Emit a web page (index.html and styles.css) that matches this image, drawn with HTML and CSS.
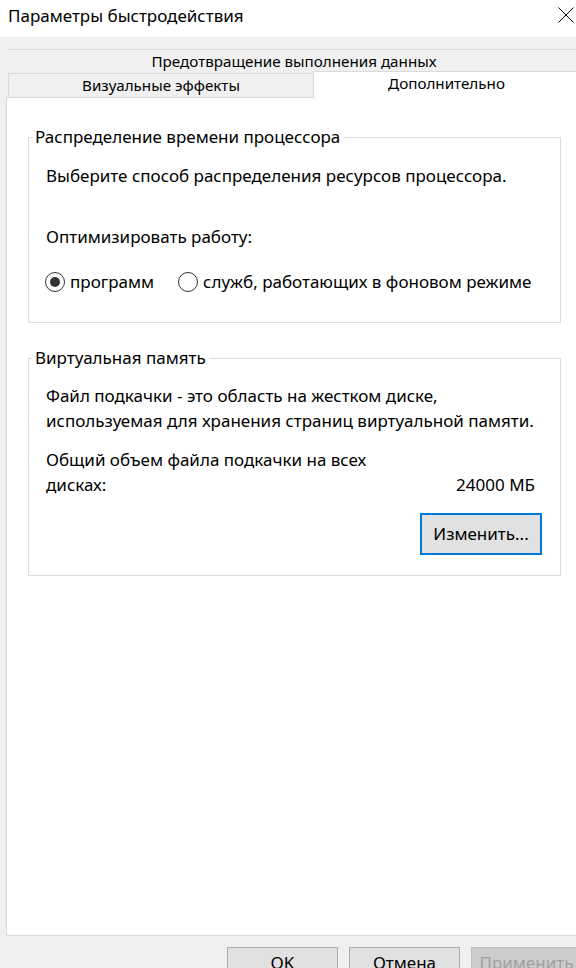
FILE: index.html
```html
<!DOCTYPE html>
<html lang="ru">
<head>
<meta charset="utf-8">
<title>Параметры быстродействия</title>
<link rel="stylesheet" href="styles.css">
</head>
<body>
<div class="dialog">
  <div class="titlebar">
    <span class="title">Параметры быстродействия</span>
    <svg class="close" viewBox="0 0 16 16" width="16" height="16" aria-hidden="true">
      <path d="M0.5 0.5 L15.5 15.5 M15.5 0.5 L0.5 15.5" stroke="#000" stroke-width="1" fill="none"/>
    </svg>
  </div>

  <div class="tabs">
    <div class="tab-row tab-row-back">
      <div class="tab tab-wide">Предотвращение выполнения данных</div>
    </div>
    <div class="tab-row tab-row-front">
      <div class="tab tab-plain">Визуальные эффекты</div>
      <div class="tab tab-active">Дополнительно</div>
    </div>
  </div>

  <div class="panel">
    <fieldset class="group group-cpu">
      <legend class="group-title">Распределение времени процессора</legend>
      <div class="group-body body-cpu">
        <p class="text">Выберите способ распределения ресурсов процессора.</p>
        <p class="text optimize">Оптимизировать работу:</p>
        <div class="radios">
          <label class="radio"><span class="radio-mark checked"></span>программ</label>
          <label class="radio"><span class="radio-mark"></span>служб, работающих в фоновом режиме</label>
        </div>
      </div>
    </fieldset>

    <fieldset class="group group-vm">
      <legend class="group-title">Виртуальная память</legend>
      <div class="group-body body-vm">
        <p class="text text-multi">Файл подкачки - это область на жестком диске, используемая для хранения страниц виртуальной памяти.</p>
        <div class="total">
          <span class="total-label">Общий объем файла подкачки на всех дисках:</span>
          <span class="total-value">24000 МБ</span>
        </div>
        <div class="change-row">
          <button class="change-btn" type="button">Изменить...</button>
        </div>
      </div>
    </fieldset>
  </div>

  <div class="buttons">
    <button class="btn" type="button">OK</button>
    <button class="btn" type="button">Отмена</button>
    <button class="btn btn-disabled" type="button">Применить</button>
  </div>
</div>
</body>
</html>
```
FILE: styles.css
```css
html, body {
  margin: 0;
  padding: 0;
  overflow: hidden;
  background: #f0f0f0;
}

body {
  font-family: "Noto Sans", "Open Sans", sans-serif;
  font-size: 17px;
  color: #000;
}

.dialog {
  width: 588px;
}

/* Title bar */
.titlebar {
  height: 37px;
  box-sizing: border-box;
  background: #fff;
  display: flex;
  justify-content: space-between;
  align-items: flex-start;
  padding: 0 14px 0 8px;
}

.title {
  line-height: 24px;
  margin-top: 4px;
}

.close {
  margin-top: 7px;
  display: block;
}

/* Tabs */
.tabs {
  margin: 12px 0 0 8px;
  width: 572px;
  font-size: 15.2px;
}

.tab {
  line-height: 23px;
  text-align: center;
  border-top: 1px solid #d9d9d9;
  white-space: nowrap;
}

.tab-row-front {
  display: flex;
  align-items: flex-end;
}

.tab-plain {
  width: 306px;
  box-sizing: border-box;
  border-left: 1px solid #d9d9d9;
  border-right: 1px solid #d9d9d9;
}

.tab-active {
  flex: 1;
  height: 27px;
  box-sizing: border-box;
  margin: -2px 0 -1px;
  background: #fff;
  border-right: 1px solid #d9d9d9;
  position: relative;
  z-index: 1;
}

/* Panel */
.panel {
  margin-left: 6px;
  width: 576px;
  height: 839px;
  box-sizing: border-box;
  background: #fff;
  border: 1px solid #d9d9d9;
}

.group {
  margin: 0 0 0 21px;
  padding: 0;
  width: 533px;
  box-sizing: border-box;
  border: 1px solid #dcdcdc;
  min-inline-size: 0;
}

.group-cpu {
  margin-top: 27px;
}

.group-vm {
  margin-top: 23px;
}

.group-title {
  margin-left: 3px;
  padding: 0 3px;
  line-height: 24px;
}

.group-body {
  padding-left: 17px;
  padding-right: 25px;
}

.body-cpu {
  padding-top: 15px;
  padding-bottom: 28px;
}

.body-vm {
  padding-top: 13px;
  padding-bottom: 20px;
}

.text {
  margin: 0;
  line-height: 24px;
}

.optimize {
  margin-top: 37px;
}

.text-multi {
  line-height: 25px;
}

/* Radios */
.radios {
  display: flex;
  margin-top: 21px;
  margin-left: -1px;
  line-height: 24px;
}

.radio {
  display: flex;
  align-items: center;
}

.radio + .radio {
  margin-left: 24px;
}

.radio-mark {
  width: 20px;
  height: 20px;
  box-sizing: border-box;
  border: 1px solid #333;
  border-radius: 50%;
  margin-right: 5px;
  display: flex;
  align-items: center;
  justify-content: center;
}

.radio-mark.checked::after {
  content: "";
  width: 10px;
  height: 10px;
  border-radius: 50%;
  background: #333;
}

/* Virtual memory totals */
.total {
  display: flex;
  margin-top: 14px;
  line-height: 25px;
}

.total-label {
  width: 340px;
}

.total-value {
  margin-left: auto;
  align-self: flex-end;
  white-space: nowrap;
}

.change-row {
  display: flex;
  justify-content: flex-end;
  margin-top: 16px;
  margin-right: -7px;
}

.change-btn {
  width: 122px;
  height: 42px;
  box-sizing: border-box;
  border: 2px solid #0078d7;
  background: #e1e1e1;
  font: inherit;
  color: #000;
  line-height: 38px;
  padding: 0;
}

/* Bottom buttons */
.buttons {
  display: flex;
  justify-content: flex-end;
  gap: 11px;
  padding-right: 6px;
  margin-top: 11px;
}

.btn {
  width: 111px;
  height: 31px;
  box-sizing: border-box;
  border: 1px solid #adadad;
  background: #e1e1e1;
  font: inherit;
  color: #000;
  line-height: 29px;
  padding: 0;
}

.btn-disabled {
  background: #cccccc;
  border-color: #bfbfbf;
  color: #a0a0a0;
}
```
